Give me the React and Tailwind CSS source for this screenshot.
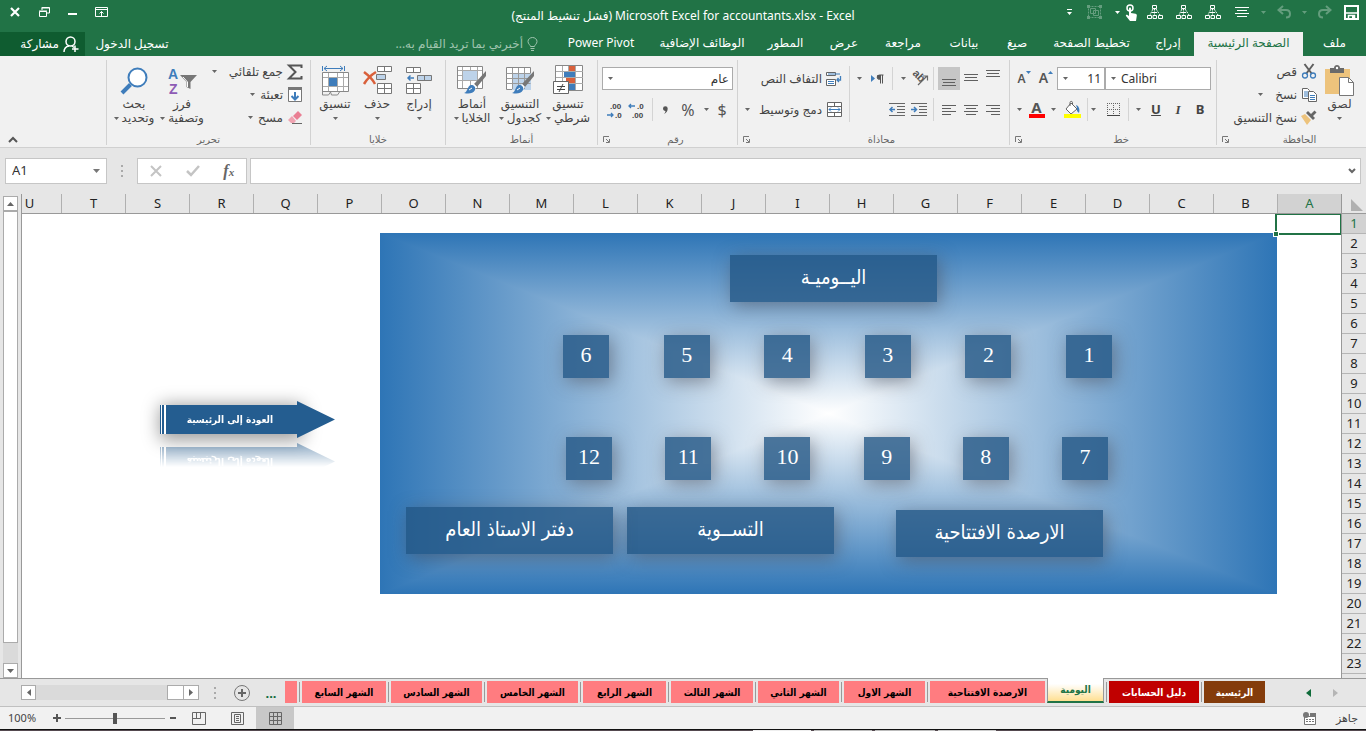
import { useState } from "react";

const COLUMNS = "ABCDEFGHIJKLMNOPQRSTU".split("");
const ROWS = Array.from({ length: 24 }, (_, i) => i + 1);

const RIBBON_TABS = [
  { label: "ملف", width: "w-[63px]" },
  { label: "الصفحة الرئيسية", width: "w-[109px]", active: true },
  { label: "إدراج", width: "w-[52px]" },
  { label: "تخطيط الصفحة", width: "w-[101px]" },
  { label: "صيغ", width: "w-[48px]" },
  { label: "بيانات", width: "w-[58px]" },
  { label: "مراجعة", width: "w-[64px]" },
  { label: "عرض", width: "w-[54px]" },
  { label: "المطور", width: "w-[63px]" },
  { label: "الوظائف الإضافية", width: "w-[104px]" },
  { label: "Power Pivot", width: "w-[98px]" },
];

const SHEETS = [
  { name: "الرئيسية", width: "w-[61px]", look: "bg-[#843c0c] text-white" },
  { name: "دليل الحسابات", width: "w-[90px]", look: "bg-[#c00000] text-white" },
  { name: "اليومية", width: "w-[57px]", active: true },
  { name: "الارصدة الافتتاحية", width: "w-[115px]" },
  { name: "الشهر الاول", width: "w-[81px]" },
  { name: "الشهر الثاني", width: "w-[81px]" },
  { name: "الشهر الثالث", width: "w-[82px]" },
  { name: "الشهر الرابع", width: "w-[83px]" },
  { name: "الشهر الخامس", width: "w-[91px]" },
  { name: "الشهر السادس", width: "w-[91px]" },
  { name: "الشهر السابع", width: "w-[84px]" },
];

const SHADOW = "bg-[#235684]/80 text-white shadow-[3px_4px_18px_rgba(70,70,80,0.5)]";

function Ico({ w, h, children, className = "" }) {
  return (
    <svg width={w} height={h} viewBox={`0 0 ${w} ${h}`} fill="none" className={`shrink-0 overflow-visible ${className}`} aria-hidden="true">
      {children}
    </svg>
  );
}

function Caret({ className = "text-[#666]" }) {
  return (
    <Ico w={5} h={3} className={className}>
      <path d="M0 0h5L2.5 3z" fill="currentColor" />
    </Ico>
  );
}

function Lines({ rows, w = 14, h = 14, color = "#606060" }) {
  return (
    <Ico w={w} h={h}>
      {rows.map(([x, y, len]) => (
        <rect key={y} x={x} y={y} width={len} height="1" fill={color} />
      ))}
    </Ico>
  );
}

function HierarchyIcon() {
  return (
    <Ico w={16} h={16}>
      <g stroke="#fff">
        <path d="M5.5 1.5h4v3h-4zM.5 11.5h4v3h-4zM6 11.5h3.500v3H6zM11.500 11.500h4v3h-4z" />
        <path d="M7.500 4.500v7M6 5l-3 6M9 5l4 6" strokeDasharray="2 1" />
        <path d="M5 8.500h5" />
      </g>
    </Ico>
  );
}

function QuickButton({ label, width, children }) {
  return (
    <button aria-label={label} className={`flex h-6 shrink-0 items-center justify-center text-white ${width}`}>
      {children}
    </button>
  );
}

function TitleBar() {
  return (
    <header className="grid h-8 shrink-0 grid-cols-[1fr_auto_1fr] bg-[#217346] text-white">
      <div className="flex">
        <QuickButton label="حفظ" width="w-[29px]">
          <Ico w={15} h={15}>
            <path d="M1 1h13v13H1z" stroke="#fff" strokeWidth="2" />
            <path d="M1 8h13M4.500 14v-3.500h6V14" stroke="#fff" strokeWidth="1.500" />
            <path d="M8 11h2v3H8z" fill="#fff" />
          </Ico>
        </QuickButton>
        <QuickButton label="إعادة" width="w-[26px]">
          <Ico w={15} h={14} className="opacity-30">
            <path d="M9 1l4.500 4L9 9M13 5H6C3 5 2 7 2 9s1 3.500 4 3.500" stroke="#fff" strokeWidth="2" />
          </Ico>
        </QuickButton>
        <QuickButton label="خيارات الإعادة" width="w-[13px]"><Caret className="text-white/30" /></QuickButton>
        <QuickButton label="تراجع" width="w-[28px]">
          <Ico w={15} h={14} className="opacity-30">
            <path d="M6 1L1.500 5 6 9M2 5h7c3 0 4 2 4 4s-1 3.500-4 3.500" stroke="#fff" strokeWidth="2" />
          </Ico>
        </QuickButton>
        <QuickButton label="خيارات التراجع" width="w-[13px]"><Caret className="text-white/30" /></QuickButton>
        <QuickButton label="توسيط" width="w-[30px]">
          <Lines color="#fff" rows={[[0, 2, 14], [2, 5, 10], [0, 8, 14], [2, 11, 10]]} />
        </QuickButton>
        <QuickButton label="تخطيط هرمي 1" width="w-[29px]"><HierarchyIcon /></QuickButton>
        <QuickButton label="تخطيط هرمي 2" width="w-[29px]"><HierarchyIcon /></QuickButton>
        <QuickButton label="تخطيط هرمي 3" width="w-[29px]"><HierarchyIcon /></QuickButton>
        <QuickButton label="وضع اللمس" width="w-[17px]">
          <Ico w={13} h={17}>
            <circle cx="5" cy="4" r="3" stroke="#fff" strokeWidth="1.500" />
            <path d="M4 4.500c0-1.500 2-1.500 2 0V9l4.500.8c1 .2 1.500.8 1.300 2L11 17H5L1 12c-.6-1 .6-1.800 1.500-1L4 12z" fill="#fff" />
          </Ico>
        </QuickButton>
        <QuickButton label="خيارات اللمس" width="w-[11px]"><Caret className="text-white" /></QuickButton>
        <QuickButton label="تجميع" width="w-[35px]">
          <Ico w={17} h={16} className="opacity-30">
            <g stroke="#fff">
              <path d="M2.500 2.500h12v11h-12z" strokeDasharray="2 1" />
              <path d="M4.500 4.500h5v5h-5zM7.500 6.500h5v5h-5z" />
            </g>
            <path d="M1 1h3v3H1zM13 1h3v3h-3zM1 12h3v3H1zM13 12h3v3h-3z" fill="#fff" />
          </Ico>
        </QuickButton>
        <QuickButton label="تخصيص الشريط" width="w-[16px]">
          <Ico w={5} h={7}>
            <path d="M0 0h5v1H0zM0 3h5L2.500 6z" fill="#fff" />
          </Ico>
        </QuickButton>
      </div>
      <h1 className="self-center text-xs whitespace-nowrap">Microsoft Excel for accountants.xlsx - Excel (فشل تنشيط المنتج)</h1>
      <div className="flex justify-end">
        <QuickButton label="خيارات عرض الشريط" width="w-[30px]">
          <Ico w={13} h={10}>
            <path d="M.5.5h12v9H.5zM0 2.500h13M6.500 9V4.500M4.500 6.500l2-2 2 2" stroke="#fff" />
          </Ico>
        </QuickButton>
        <QuickButton label="تصغير" width="w-[28px]"><span className="mt-1 h-[2px] w-[9px] bg-white" /></QuickButton>
        <QuickButton label="استعادة" width="w-[28px]">
          <Ico w={11} h={10}>
            <path d="M3 3V.5h7.500V6H8M2.500 1h8M.5 4.500h7v5h-7zM0 4h8" stroke="#fff" />
          </Ico>
        </QuickButton>
        <QuickButton label="إغلاق" width="w-[30px]">
          <Ico w={10} h={10}>
            <path d="M1 1l8 8M9 1L1 9" stroke="#fff" strokeWidth="2.200" />
          </Ico>
        </QuickButton>
      </div>
    </header>
  );
}

function RibbonTabs() {
  return (
    <nav className="flex h-6 shrink-0 bg-[#217346] text-xs text-white">
      {RIBBON_TABS.map((tab) => (
        <button
          key={tab.label}
          className={`shrink-0 whitespace-nowrap pb-0.5 ${tab.width} ${tab.active ? "bg-[#f1f1f1] text-[#217346]" : ""}`}
        >
          {tab.label}
        </button>
      ))}
      <label className="ms-[14px] flex items-center gap-1 text-[#9fc4ae]">
        <Ico w={11} h={14}>
          <path d="M3.500 9.500C3.500 8 1 7 1 4.500a4.500 4 0 0 1 9 0C10 7 7.500 8 7.500 9.500zM3.500 11.500h4M4 13.500h3" stroke="currentColor" />
        </Ico>
        <input className="w-40 bg-transparent outline-none placeholder:text-[#9fc4ae]" placeholder="أخبرني بما تريد القيام به..." aria-label="أخبرني بما تريد القيام به" />
      </label>
      <div className="ms-auto flex">
        <button className="w-[94px] whitespace-nowrap">تسجيل الدخول</button>
        <button className="flex w-[85px] items-center gap-1 bg-[#0f5c30] ps-[6px]">
          <Ico w={16} h={16}>
            <circle cx="7.500" cy="5.500" r="4.500" stroke="#fff" strokeWidth="1.500" />
            <path d="M1 16c0-3 2-5.500 5-6M9 10l2 1.500M12 9.500V16M9 13h6.500" stroke="#fff" strokeWidth="1.500" />
          </Ico>
          مشاركة
        </button>
      </div>
    </nav>
  );
}

function Group({ title, width, launcher, children }) {
  return (
    <section className={`mt-1 mb-[2px] flex shrink-0 flex-col border-l border-[#d2d2d2] ${width}`}>
      <div className="flex h-[73px]">{children}</div>
      <div className="flex items-center text-[10px] leading-3 text-[#666]">
        <h2 className="grow text-center">{title}</h2>
        {launcher && (
          <button aria-label={`خيارات ${title}`} className="flex w-4 justify-center">
            <Ico w={7} h={7}>
              <path d="M.5 6V.5H6M3 3l3 3M6.500 3v3.500H3" stroke="#777" />
            </Ico>
          </button>
        )}
      </div>
    </section>
  );
}

function LargeButton({ lines, width, icon }) {
  return (
    <button className={`flex h-full shrink-0 flex-col items-center pt-1 leading-[14px] ${width}`}>
      <span className="flex h-[33px] items-center">{icon}</span>
      <span className="whitespace-nowrap">{lines[0]}</span>
      <span className="flex h-[14px] items-center gap-[3px] whitespace-nowrap">
        {lines[1]}
        <Caret />
      </span>
    </button>
  );
}

function SmallButton({ label, icon, caret }) {
  return (
    <button className="flex h-[23px] items-center gap-1 whitespace-nowrap">
      <span className="flex w-4 justify-center">{icon}</span>
      {label}
      {caret && <span className={caret}><Caret /></span>}
    </button>
  );
}

function Tool({ label, width = "w-[22px]", on, children }) {
  return (
    <button aria-label={label} className={`flex h-[23px] shrink-0 items-center justify-center ${width} ${on ? "bg-[#c6c6c6]" : ""}`}>
      {children}
    </button>
  );
}

function Sep() {
  return <span className="h-[23px] w-px shrink-0 bg-[#d4d4d4]" />;
}

function Picker({ label, value, width, align = "text-right" }) {
  return (
    <div className={`relative h-[23px] shrink-0 border border-[#ababab] bg-white ${width}`}>
      <select aria-label={label} className={`h-full w-full appearance-none bg-transparent px-[3px] text-xs text-[#333] ${align}`}>
        <option>{value}</option>
      </select>
      <span className="pointer-events-none absolute inset-y-0 left-[5px] flex items-center"><Caret /></span>
    </div>
  );
}

function ClipboardGroup() {
  return (
    <Group title="الحافظة" width="w-[150px]" launcher>
      <LargeButton
        width="ms-1 w-[45px]"
        lines={["لصق"]}
        icon={
          <Ico w={29} h={31}>
            <path d="M0 4h25v25H0z" fill="#edc37c" />
            <path d="M5 3h4c0-4 6-4 6 0h4v5H5z" fill="#6a6a6a" />
            <circle cx="12" cy="3" r="1.200" fill="#fff" />
            <path d="M14.500 12.500h9l5 5v13h-14z" fill="#fff" stroke="#777" />
            <path d="M23.500 12.500v5h5" stroke="#777" />
          </Ico>
        }
      />
      <div className="flex flex-col">
        <SmallButton
          label="قص"
          icon={
            <Ico w={14} h={15}>
              <path d="M2.500 0L10 10M11.500 0L4 10" stroke="#5f5f5f" strokeWidth="2" />
              <circle cx="3" cy="11.500" r="2.500" stroke="#3f7dbb" strokeWidth="1.300" />
              <circle cx="11" cy="11.500" r="2.500" stroke="#3f7dbb" strokeWidth="1.300" />
            </Ico>
          }
        />
        <SmallButton
          label="نسخ"
          caret="ms-2"
          icon={
            <Ico w={15} h={14}>
              <path d="M.5.500h5l2 2v8h-7z" fill="#fff" stroke="#666" />
              <path d="M2 4h4M2 6h4M2 8h4" stroke="#3f7dbb" />
              <path d="M6.500 3.500h5l3 3v7h-8z" fill="#fff" stroke="#666" />
              <path d="M8 7.500h5M8 9.500h5M8 11.500h5" stroke="#3f7dbb" />
            </Ico>
          }
        />
        <SmallButton
          label="نسخ التنسيق"
          icon={
            <Ico w={16} h={15}>
              <path d="M0 6l4-2 6 6-4 5z" fill="#edc37c" />
              <path d="M5 3l2-2 7 7-2 2z" fill="#666" />
              <path d="M9.500 4.500l4-4 2 2-4 4z" fill="#666" />
            </Ico>
          }
        />
      </div>
    </Group>
  );
}

function FontGroup() {
  return (
    <Group title="خط" width="w-[207px]" launcher>
      <div className="flex flex-col gap-2 ps-[5px] pt-[7px]">
        <div className="flex items-center">
          <Picker label="الخط" value="Calibri" width="w-[106px]" align="pl-[15px] text-left" />
          <Picker label="حجم الخط" value="11" width="w-[48px]" />
          <Tool label="تكبير الخط">
            <Ico w={5} h={3} className="mb-3"><path d="M0 3h5L2.500 0z" fill="#3f7dbb" /></Ico>
            <span className="font-semibold text-[14px] text-[#555]">A</span>
          </Tool>
          <Tool label="تصغير الخط">
            <Ico w={5} h={3} className="mb-3"><path d="M0 0h5L2.500 3z" fill="#3f7dbb" /></Ico>
            <span className="font-semibold text-xs text-[#555]">A</span>
          </Tool>
        </div>
        <div className="flex items-center text-[13px] text-[#444]">
          <Tool label="غامق"><b>B</b></Tool>
          <Tool label="مائل"><i className="font-['Liberation_Serif',serif] font-bold">I</i></Tool>
          <Tool label="تسطير"><b className="underline">U</b></Tool>
          <Tool label="خيارات التسطير" width="w-[14px]"><Caret /></Tool>
          <span className="w-[2px]" />
          <Sep />
          <Tool label="حدود" width="w-[30px]">
            <Ico w={13} h={13}>
              <path d="M.5 0v12M6.500 0v12M12.500 0v12M0 .5h13M0 6.500h13" stroke="#666" strokeDasharray="1 1" />
              <path d="M0 12.500h13" stroke="#444" />
            </Ico>
          </Tool>
          <Tool label="خيارات الحدود" width="w-[10px]"><Caret /></Tool>
          <Sep />
          <Tool label="لون التعبئة" width="w-[30px]">
            <Ico w={17} h={17}>
              <path d="M7 2l6 6-6 5-5-5z" fill="#fff" stroke="#666" />
              <path d="M6 5V1.500c0-1.500 2.500-1.500 2.500 0V4" stroke="#666" />
              <path d="M12 4c3 1 4 4 3 8l-2-2V7z" fill="#3f7dbb" />
              <path d="M0 13h17v4H0z" fill="#ff0" />
            </Ico>
          </Tool>
          <Tool label="خيارات التعبئة" width="w-[8px]"><Caret /></Tool>
          <Tool label="لون الخط" width="w-[25px]">
            <span className="flex w-4 flex-col items-center text-[15px] leading-[13px] font-bold text-[#555]">
              A<span className="h-1 w-4 bg-[#f00]" />
            </span>
          </Tool>
          <Tool label="خيارات لون الخط" width="w-[10px]"><Caret /></Tool>
        </div>
      </div>
    </Group>
  );
}

function AlignmentGroup() {
  return (
    <Group title="محاذاة" width="w-[272px]" launcher>
      <div className="flex flex-col gap-2 ps-[5px] pt-[7px]">
        <div className="flex items-center">
          <Tool label="محاذاة للأعلى"><Lines h={20} rows={[[0, 1, 14], [1, 4, 12], [0, 7, 14]]} /></Tool>
          <Tool label="محاذاة للوسط"><Lines h={20} rows={[[0, 5, 14], [1, 8, 12], [0, 11, 14]]} /></Tool>
          <Tool label="محاذاة للأسفل" on><Lines h={20} rows={[[0, 10, 14], [1, 13, 12], [0, 16, 14]]} /></Tool>
          <span className="w-1" />
          <Sep />
          <Tool label="الاتجاه" width="w-[26px]">
            <Ico w={17} h={17}>
              <text
                x="0" y="4" fontSize="11" fontWeight="600" fill="#555" transform="rotate(45 0 4)"
                style={{ direction: "ltr" }} className="font-['Liberation_Sans',sans-serif]"
              >
                ab
              </text>
              <path d="M6 15l9-9M11 6h4.500v4.500" stroke="#666" strokeWidth="1.200" />
            </Ico>
          </Tool>
          <Tool label="خيارات الاتجاه" width="w-[8px]"><Caret /></Tool>
          <span className="w-[6px]" />
          <Sep />
          <Tool label="اتجاه النص" width="w-[30px]">
            <Ico w={13} h={10}>
              <path d="M0 1l4 3.500L0 8z" fill="#3f7dbb" />
              <path d="M12.500 1H8.500a2 2 0 0 0 0 4.500H9M9.500 1v8.500M11.500 1v8.500" stroke="#555" />
              <path d="M6.500 1h3v4h-2c-2-1-2-3-1-4z" fill="#555" />
            </Ico>
          </Tool>
          <Tool label="خيارات اتجاه النص" width="w-[6px]"><Caret /></Tool>
        </div>
        <div className="flex items-center">
          <Tool label="محاذاة لليمين"><Lines rows={[[0, 2, 14], [5, 5, 9], [0, 8, 14], [5, 11, 9]]} /></Tool>
          <Tool label="توسيط"><Lines rows={[[0, 2, 14], [2, 5, 10], [0, 8, 14], [2, 11, 10]]} /></Tool>
          <Tool label="محاذاة لليسار"><Lines rows={[[0, 2, 14], [0, 5, 9], [0, 8, 14], [0, 11, 9]]} /></Tool>
          <span className="w-1" />
          <Sep />
          <span className="w-[3px]" />
          <Tool label="إنقاص المسافة البادئة">
            <Ico w={16} h={13}>
              <path d="M0 .5h16M8 3.500h8M8 6.500h8M8 9.500h8M0 12.500h16" stroke="#666" />
              <path d="M0 6.500h5M3 4l2.500 2.500L3 9" stroke="#3f7dbb" strokeWidth="1.500" />
            </Ico>
          </Tool>
          <Tool label="زيادة المسافة البادئة">
            <Ico w={16} h={13}>
              <path d="M0 .5h16M8 3.500h8M8 6.500h8M8 9.500h8M0 12.500h16" stroke="#666" />
              <path d="M1 6.500h5M3.500 4L1 6.500 3.500 9" stroke="#3f7dbb" strokeWidth="1.500" />
            </Ico>
          </Tool>
        </div>
      </div>
      <span className="ms-auto mt-[6px] h-14 w-px bg-[#d4d4d4]" />
      <div className="flex w-[111px] flex-col gap-2 ps-[7px] pt-[7px]">
        <SmallButton
          label="التفاف النص"
          icon={
            <Ico w={16} h={15}>
              <path d="M.5 1.500h9v3h-9zM.5 8.500h9v6h-9z" fill="#fff" stroke="#666" />
              <path d="M2 3h12M2 10.500h6M2 12.500h6" stroke="#3f7dbb" />
              <path d="M14.500 5v4H11M12.500 7L11 9l2 2" stroke="#3f7dbb" strokeWidth="1.300" />
            </Ico>
          }
        />
        <div className="flex items-center justify-between">
          <SmallButton
            label="دمج وتوسيط"
            icon={
              <Ico w={15} h={15}>
                <path d="M.5.500h14v14H.500zM.500 4.500h14M.500 10.500h14M7.500.500v4M7.500 10.500v4" fill="#fff" stroke="#666" />
                <path d="M2 7.500h11M4 5.500l-2 2 2 2M11 5.500l2 2-2 2" stroke="#3f7dbb" />
              </Ico>
            }
          />
          <Tool label="خيارات الدمج" width="w-[18px]"><Caret /></Tool>
        </div>
      </div>
    </Group>
  );
}

function DecimalIcon({ up }) {
  return (
    <Ico w={16} h={18}>
      <g fontSize="8" fill="#444" fontWeight="700" style={{ direction: "ltr" }} className="font-['Liberation_Sans',sans-serif]">
        <text x={up ? 9 : 4} y="8">{up ? ".0" : ".00"}</text>
        <text x={up ? 4 : 9} y="17">{up ? ".00" : ".0"}</text>
      </g>
      {up
        ? <path d="M1 5h6M3 3L1 5l2 2" stroke="#3f7dbb" strokeWidth="1.300" />
        : <path d="M1 14h6M5 12l2 2-2 2" stroke="#3f7dbb" strokeWidth="1.300" />}
    </Ico>
  );
}

function NumberGroup() {
  return (
    <Group title="رقم" width="w-[140px]" launcher>
      <div className="flex flex-col gap-2 ps-[4px] pt-[7px]">
        <Picker label="تنسيق الأرقام" value="عام" width="w-[131px]" />
        <div className="flex items-center text-base text-[#555]">
          <Tool label="عملة">$</Tool>
          <Tool label="خيارات العملة" width="w-[10px]"><Caret /></Tool>
          <Tool label="نسبة مئوية" width="w-[26px]">%</Tool>
          <Tool label="فاصلة" width="w-[20px]">
            <Ico w={5} h={8}><path d="M0 2.500a2.300 2.300 0 0 1 4.700 0C4.700 5 3.500 7 1 8c1-1 1.500-2 1.500-3C1 5 0 4 0 2.500z" fill="#555" /></Ico>
          </Tool>
          <span className="w-[2px]" />
          <Sep />
          <Tool label="زيادة المنازل العشرية" width="w-[32px]"><DecimalIcon up /></Tool>
          <Tool label="إنقاص المنازل العشرية" width="w-[12px]"><DecimalIcon /></Tool>
        </div>
      </div>
    </Group>
  );
}

function Brush() {
  return (
    <g>
      <path d="M29 6v5l-9 11-3-3z" fill="#777" />
      <path d="M17 19l3 3-2 2-3-3z" fill="#fff" />
      <path d="M14 20c3 0 5 2 4 5-2 4-7 4-11 3 4-1 3-7 7-8z" fill="#3f7dbb" />
      <path d="M12 25l3-2" stroke="#fff" />
    </g>
  );
}

function StylesGroup() {
  return (
    <Group title="أنماط" width="w-[152px]">
      <LargeButton
        width="ms-[5px] w-12"
        lines={["تنسيق", "شرطي"]}
        icon={
          <Ico w={30} h={31}>
            <path d="M2.500.5h27v25h-27z" fill="#fff" stroke="#888" />
            <path d="M9.500 1v24M15.500 1v24M22.500 1v24M3 6.500h27M3 12.500h27M3 18.500h27" stroke="#aaa" />
            <path d="M16 1h6v5h-6zM13 13h9v5h-9z" fill="#d9603b" />
            <path d="M11 7h11v5H11zM16 19h6v6h-6z" fill="#3f7dbb" />
            <path d="M.5 16.500h15v12H.5z" fill="#fff" stroke="#666" />
            <path d="M4 21.500h8M4 24.500h8M10 19l-4 8" stroke="#444" />
          </Ico>
        }
      />
      <LargeButton
        width="w-12"
        lines={["التنسيق", "كجدول"]}
        icon={
          <Ico w={30} h={31}>
            <path d="M1.500 2.500h24v22h-24z" fill="#fff" stroke="#888" />
            <path d="M7 8h19v17H7z" fill="#bdd3ea" />
            <path d="M1.500 8.500h24M1.500 13.500h24M1.500 18.500h24M7.500 3v21M13.500 3v21M19.500 3v21" stroke="#999" />
            <Brush />
          </Ico>
        }
      />
      <LargeButton
        width="w-12"
        lines={["أنماط", "الخلايا"]}
        icon={
          <Ico w={30} h={31}>
            <path d="M.5 1.500h25v22H.5z" fill="#fff" stroke="#888" />
            <path d="M5.500 2v21M20.500 2v21M1 5.500h24M1 15.500h24M13.500 2v3M13.500 16v7M1 10.500h4" stroke="#aaa" />
            <path d="M6 6h14v9H6z" fill="#bdd3ea" />
            <Brush />
          </Ico>
        }
      />
    </Group>
  );
}

function CellsGroup() {
  return (
    <Group title="خلايا" width="w-[135px]">
      <LargeButton
        width="ms-[5px] w-[42px]"
        lines={["إدراج"]}
        icon={
          <Ico w={28} h={29}>
            <path d="M1.500 1.500h14v5h-14zM8.500 1.500v5M1.500 17.500h14v10h-14zM8.500 17.500v10M1.500 22.500h14" fill="#fff" stroke="#777" />
            <path d="M12.500 9.500h14v5h-14zM19.500 9.500v5" fill="#bdd3ea" stroke="#777" />
            <path d="M3 12h6M5.500 9.500L3 12l2.500 2.500" stroke="#3f7dbb" strokeWidth="1.500" />
          </Ico>
        }
      />
      <LargeButton
        width="w-[42px]"
        lines={["حذف"]}
        icon={
          <Ico w={30} h={29}>
            <path d="M15.500.5h14v5h-14zM22.500.5v5M15.500 17.500h14v10h-14zM22.500 17.500v10M15.500 22.500h14" fill="#fff" stroke="#777" />
            <path d="M14.500 8.500h9v5h-9z" fill="#bdd3ea" stroke="#777" />
            <path d="M2 6c4 3 9 8 11 12M14 6C9 9 5 13 2 18" stroke="#d9603b" strokeWidth="2.500" />
          </Ico>
        }
      />
      <LargeButton
        width="w-[42px]"
        lines={["تنسيق"]}
        icon={
          <Ico w={29} h={32}>
            <path d="M1.500 1v5M23.500 1v5M3 3.500h19M6 1L3 3.500 6 6M19 1l3 2.500L19 6" stroke="#3f7dbb" />
            <path d="M1.500 7.500h26v19h-26z" fill="#fff" stroke="#888" />
            <path d="M7.500 8v18M16.500 8v18M22.500 8v18M2 12.500h25M2 21.500h25" stroke="#aaa" />
            <path d="M8 13h8v8H8z" fill="#3f7dbb" />
            <path d="M1.500 26v4h6l2-3 1 3h6l2-3" stroke="#888" />
          </Ico>
        }
      />
    </Group>
  );
}

function EditingGroup() {
  return (
    <Group title="تحرير" width="w-[204px]">
      <div className="flex w-[104px] flex-col ps-[7px]">
        <SmallButton
          label="جمع تلقائي"
          caret="ms-2"
          icon={
            <Ico w={16} h={16}>
              <path d="M14.500 4V1.500H2L8.500 8 2 14.500h12.500V12" stroke="#555" strokeWidth="2" />
            </Ico>
          }
        />
        <SmallButton
          label="تعبئة"
          caret="ms-px"
          icon={
            <Ico w={14} h={15}>
              <path d="M.5.5h13v14H.5z" fill="#fff" stroke="#777" />
              <path d="M0 0h14v3H0z" fill="#777" />
              <path d="M7 5v8M3.500 9L7 12.500 10.500 9" stroke="#3f7dbb" strokeWidth="2" />
            </Ico>
          }
        />
        <SmallButton
          label="مسح"
          caret="ms-px"
          icon={
            <Ico w={15} h={14}>
              <path d="M5 5l5-5 4 4-5 5z" fill="#ea7f93" />
              <path d="M0 9l4-4 4 5-2 2H3z" fill="#f0a3b1" />
              <path d="M4 12.500h10" stroke="#666" />
            </Ico>
          }
        />
      </div>
      <LargeButton
        width="w-12"
        lines={["فرز", "وتصفية"]}
        icon={
          <Ico w={29} h={28}>
            <g fontSize="14" fontWeight="700" style={{ direction: "ltr" }} className="font-['Liberation_Sans',sans-serif]">
              <text x="0" y="12" fill="#3f7dbb">A</text>
              <text x="1" y="27" fill="#8e5bb5">Z</text>
            </g>
            <path d="M12 8h17l-6.500 7v7l-4-2v-5z" fill="#777" />
            <path d="M15 10l4.500 5v5" stroke="#fff" />
          </Ico>
        }
      />
      <LargeButton
        width="w-12"
        lines={["بحث", "وتحديد"]}
        icon={
          <Ico w={28} h={28}>
            <circle cx="17.500" cy="10.500" r="9" fill="#fff" stroke="#3f7dbb" strokeWidth="2" />
            <path d="M10.500 17.500L2 26" stroke="#3f7dbb" strokeWidth="4" />
          </Ico>
        }
      />
    </Group>
  );
}

function Ribbon() {
  return (
    <div className="flex shrink-0 border-b border-[#d0d0d0] bg-[#f1f1f1] text-xs text-[#444]">
      <ClipboardGroup />
      <FontGroup />
      <AlignmentGroup />
      <NumberGroup />
      <StylesGroup />
      <CellsGroup />
      <EditingGroup />
      <button aria-label="طي الشريط" className="ms-auto me-2 mb-1 self-end">
        <Ico w={10} h={7}>
          <path d="M1 6l4-4 4 4" stroke="#555" strokeWidth="2" />
        </Ico>
      </button>
    </div>
  );
}

function Dots() {
  return (
    <Ico w={2} h={12}>
      <path d="M0 0h2v2H0zM0 5h2v2H0zM0 10h2v2H0z" fill="#aaa" />
    </Ico>
  );
}

function FormulaBar() {
  const [formula, setFormula] = useState("");
  return (
    <div dir="ltr" className="flex h-[46px] shrink-0 items-start px-[5px] pt-[10px]">
      <div className="flex h-[26px] w-[102px] items-center border border-[#c6c6c6] bg-white pr-[6px]">
        <input aria-label="مربع الاسم" defaultValue="A1" className="w-full min-w-0 bg-transparent px-[6px] text-[13px] text-[#333] outline-none" />
        <Ico w={7} h={4}><path d="M0 0h7L3.500 4z" fill="#777" /></Ico>
      </div>
      <span className="flex h-[26px] w-[30px] items-center justify-center"><Dots /></span>
      <div className="flex h-[26px] w-[110px] items-center justify-around border border-[#c6c6c6] bg-white">
        <button aria-label="إلغاء"><Ico w={12} h={12}><path d="M1 1l10 10M11 1L1 11" stroke="#c4c4c4" strokeWidth="2" /></Ico></button>
        <button aria-label="إدخال"><Ico w={14} h={12}><path d="M1 6l4 4L13 1" stroke="#c4c4c4" strokeWidth="2.500" /></Ico></button>
        <button aria-label="إدراج دالة" className="font-['Liberation_Serif',serif] text-base leading-4 font-bold text-[#666] italic">
          f<span className="text-[11px]">x</span>
        </button>
      </div>
      <div className="ml-[3px] flex h-[26px] grow items-center border border-[#c6c6c6] bg-white pr-1">
        <input aria-label="شريط الصيغة" value={formula} onChange={(e) => setFormula(e.target.value)} className="grow bg-transparent px-1 text-[13px] outline-none" />
        <Ico w={8} h={6}><path d="M1 1l3 3 3-3" stroke="#666" strokeWidth="2" /></Ico>
      </div>
    </div>
  );
}

// rectangular "from center" gradient built of four triangles
function PanelBackdrop() {
  const sides = [
    { id: "top", points: "0,0 100,0 50,50", x2: 50, y2: 0 },
    { id: "right", points: "100,0 100,100 50,50", x2: 100, y2: 50 },
    { id: "bottom", points: "100,100 0,100 50,50", x2: 50, y2: 100 },
    { id: "left", points: "0,100 0,0 50,50", x2: 0, y2: 50 },
  ];
  return (
    <svg viewBox="0 0 100 100" preserveAspectRatio="none" className="absolute inset-0 h-full w-full bg-[#2e75b6]" aria-hidden="true">
      {sides.map((s) => (
        <g key={s.id}>
          <linearGradient id={s.id} gradientUnits="userSpaceOnUse" x1="50" y1="50" x2={s.x2} y2={s.y2}>
            <stop offset="0" stopColor="#fff" />
            <stop offset="1" stopColor="#2e75b6" />
          </linearGradient>
          <polygon points={s.points} fill={`url(#${s.id})`} shapeRendering="crispEdges" />
        </g>
      ))}
    </svg>
  );
}

function MonthRow({ months, place }) {
  return (
    <div className={`absolute flex justify-between ${place}`}>
      {months.map((m) => (
        <button key={m} className={`h-[43px] w-[46px] pb-1 font-['Liberation_Serif',serif] text-[22px] ${SHADOW}`}>
          {m}
        </button>
      ))}
    </div>
  );
}

function BigButton({ place, children }) {
  return (
    <button className={`absolute h-[47px] w-[207px] pb-1 font-['DejaVu_Sans_Condensed','DejaVu_Sans',sans-serif] text-xl ${place} ${SHADOW}`}>
      {children}
    </button>
  );
}

function HomeArrow() {
  return (
    <div className="absolute top-[187px] left-[138px] h-[37px] w-[175px]">
      <div className="absolute top-1 right-[38px] bottom-1 left-0 shadow-[3px_3px_18px_3px_rgba(0,0,0,0.4)]" />
      <button className="relative flex h-full w-full items-center text-white [-webkit-box-reflect:below_5px_linear-gradient(transparent_35%,rgba(0,0,0,0.5))]">
        <svg viewBox="0 0 175 37" className="absolute inset-0 h-full w-full" aria-hidden="true">
          <path d="M0 4h137v29H0z" fill="#fff" />
          <path d="M6 4h131V0l38 18.500L137 37v-4H6zM0 4h1v29H0zM2 4h2v29H2z" fill="#245d90" />
        </svg>
        <span className="relative w-full pr-[62px] pl-[38px] text-center font-['DejaVu_Sans_Condensed','DejaVu_Sans',sans-serif] text-[10px] font-bold whitespace-nowrap">
          العودة إلى الرئيسية
        </span>
      </button>
    </div>
  );
}

function Sheet() {
  return (
    <main className="flex min-h-0 grow overflow-hidden">
      <div className="flex w-6 shrink-0 flex-col text-[13px] text-[#222]">
        <div className="flex h-[20px] shrink-0 items-end justify-end border-b border-[#999] p-[2px] pl-[9px]">
          <Ico w={12} h={12}><path d="M0 0l12 12H0z" fill="#b0b0b0" /></Ico>
        </div>
        {ROWS.map((row) => (
          <div
            key={row}
            className={`flex h-5 shrink-0 items-center justify-center border-b border-[#b5b5b5] ${row === 1 ? "bg-[#d2d2d2] text-[#217346]" : ""}`}
          >
            {row}
          </div>
        ))}
      </div>
      <div className="flex min-w-0 grow flex-col border-x border-[#999]">
        <div className="flex h-[20px] shrink-0 overflow-hidden border-b border-[#999] text-[13px] text-[#222]">
          {COLUMNS.map((col) => (
            <div
              key={col}
              className={`flex w-16 shrink-0 items-center justify-center border-l border-[#b0b0b0] ${col === "A" ? "bg-[#d2d2d2] text-[#217346]" : ""}`}
            >
              {col}
            </div>
          ))}
        </div>
        <div className="relative grow overflow-hidden bg-white">
          <HomeArrow />
          <div className="absolute top-[19px] right-16 h-[361px] w-[897px] overflow-hidden">
            <PanelBackdrop />
            <BigButton place="left-[350px] top-[22px]">اليــوميـة</BigButton>
            <MonthRow months={[1, 2, 3, 4, 5, 6]} place="left-[183px] top-[102px] w-[549px]" />
            <MonthRow months={[7, 8, 9, 10, 11, 12]} place="left-[186px] top-[204px] w-[542px]" />
            <BigButton place="left-[516px] top-[277px]">الارصدة الافتتاحية</BigButton>
            <BigButton place="left-[247px] top-[274px]">التســوية</BigButton>
            <BigButton place="left-[26px] top-[274px]">دفتر الاستاذ العام</BigButton>
          </div>
          <div className="absolute -top-px -right-px h-[22px] w-[67px] border-2 border-[#217346]" />
          <div className="absolute top-[17px] right-[62px] h-[6px] w-[6px] border border-white bg-[#217346]" />
        </div>
      </div>
      <div className="flex w-[21px] shrink-0 flex-col items-center pt-[2px]">
        <button aria-label="تمرير لأعلى" className="flex h-[15px] w-[15px] shrink-0 items-center justify-center border border-[#ababab] bg-white">
          <Ico w={7} h={4}><path d="M0 4h7L3.500 0z" fill="#666" /></Ico>
        </button>
        <div className="flex w-[15px] grow flex-col bg-[#dadada]">
          <div className="mb-5 grow border border-[#ababab] bg-white" />
        </div>
        <button aria-label="تمرير لأسفل" className="flex h-[15px] w-[15px] shrink-0 items-center justify-center border border-[#ababab] bg-white">
          <Ico w={7} h={4}><path d="M0 0h7L3.500 4z" fill="#666" /></Ico>
        </button>
      </div>
    </main>
  );
}

function SheetTab({ sheet }) {
  if (sheet.active) {
    return (
      <button className={`-mt-px mb-[3px] h-[25px] shrink-0 border-x border-b-2 border-x-[#999] border-b-[#217346] bg-linear-to-b from-white from-25% to-[#ffdf90] text-[#217346] ${sheet.width}`}>
        {sheet.name}
      </button>
    );
  }
  return (
    <div className="flex shrink-0 gap-[2px]">
      <button className={`mt-[2px] h-[22px] whitespace-nowrap ${sheet.width} ${sheet.look || "bg-[#ff7c80] text-black"}`}>
        {sheet.name}
      </button>
      <span className="mt-[3px] h-5 w-px bg-[#999]" />
    </div>
  );
}

function SheetBar() {
  return (
    <div className="flex h-7 shrink-0 border-t border-[#999]">
      <div className="flex w-[101px] shrink-0 items-center gap-[22px] ps-[28px]">
        <button aria-label="الورقة السابقة"><Ico w={5} h={8}><path d="M0 0l5 4-5 4z" fill="#b5b5b5" /></Ico></button>
        <button aria-label="الورقة التالية"><Ico w={5} h={8}><path d="M5 0L0 4l5 4z" fill="#0f6b3a" /></Ico></button>
      </div>
      <div className="flex gap-[2px] font-['DejaVu_Sans_Condensed','DejaVu_Sans',sans-serif] text-[10px] font-bold">
        {SHEETS.map((sheet) => <SheetTab key={sheet.name} sheet={sheet} />)}
        <span className="mt-[2px] h-[22px] w-3 bg-[#ff7c80]" />
      </div>
      <div className="flex items-center ps-2">
        <button aria-label="المزيد من الأوراق" className="w-3 text-[13px] leading-4 font-bold text-[#0f6b3a]">...</button>
        <button aria-label="ورقة جديدة" className="ms-[15px]">
          <Ico w={16} h={16}>
            <circle cx="8" cy="8" r="7.500" stroke="#777" />
            <path d="M8 4v8M4 8h8" stroke="#666" strokeWidth="2" />
          </Ico>
        </button>
        <span className="ms-[18px]"><Dots /></span>
      </div>
      <div dir="ltr" className="mr-auto ml-[21px] flex h-[15px] w-[178px] self-center bg-[#dadada]">
        <button aria-label="تمرير لليسار" className="flex w-[15px] items-center justify-center border border-[#ababab] bg-white">
          <Ico w={4} h={7}><path d="M4 0v7L0 3.500z" fill="#666" /></Ico>
        </button>
        <span className="ml-auto w-[17px] border border-[#ababab] bg-white" />
        <button aria-label="تمرير لليمين" className="flex w-[15px] items-center justify-center border border-l-0 border-[#ababab] bg-white">
          <Ico w={4} h={7}><path d="M0 0v7l4-3.500z" fill="#666" /></Ico>
        </button>
      </div>
    </div>
  );
}

function StatusBar() {
  return (
    <footer className="flex h-[23px] shrink-0 items-stretch border-t border-t-[#c0c0c0] bg-[#f1f1f1] text-[11px] text-[#444]">
      <div className="flex items-center gap-5 ps-2">
        <span>جاهز</span>
        <Ico w={13} h={13}>
          <path d="M1.500 4.500h11v8h-11z" fill="#fff" stroke="#777" />
          <path d="M7 1h6v4H7z" fill="#777" />
          <circle cx="3" cy="3" r="3" fill="#777" />
          <path d="M3 7.500h8M3 9.500h8" stroke="#777" strokeDasharray="2 1" />
        </Ico>
      </div>
      <div className="ms-auto flex items-center">
        <button aria-label="عادي" className="flex h-full w-[38px] items-center justify-center bg-[#c8c8c8]">
          <Ico w={13} h={13}><path d="M.5.500h12v12H.500zM4.500 0v13M8.500 0v13M0 4.500h13M0 8.500h13" stroke="#666" /></Ico>
        </button>
        <button aria-label="تخطيط الصفحة" className="flex h-full w-[38px] items-center justify-center">
          <Ico w={13} h={13}><path d="M.5.500h12v12H.500zM3.500 2.500h6v8h-6zM5 4.500h3M5 6.500h3M5 8.500h3" stroke="#666" /></Ico>
        </button>
        <button aria-label="معاينة فواصل الصفحات" className="flex h-full w-[38px] items-center justify-center">
          <Ico w={14} h={13}><path d="M.5.500h13v12H.500zM.500 6.500h8v-6M4.500.500v6" stroke="#666" /></Ico>
        </button>
        <div dir="ltr" className="flex items-center pl-2">
          <span className="w-[44px] text-[11px]">100%</span>
          <button aria-label="تكبير" className="flex w-[10px] justify-center">
            <Ico w={8} h={8}><path d="M4 0v8M0 4h8" stroke="#555" strokeWidth="2" /></Ico>
          </button>
          <input
            type="range"
            aria-label="مستوى التكبير"
            defaultValue={50}
            className="mx-[3px] h-3 w-[100px] appearance-none bg-[linear-gradient(#999,#999)] bg-[length:100%_1px] bg-center bg-no-repeat [&::-webkit-slider-thumb]:h-[11px] [&::-webkit-slider-thumb]:w-1 [&::-webkit-slider-thumb]:appearance-none [&::-webkit-slider-thumb]:bg-[#555]"
          />
          <button aria-label="تصغير العرض" className="mr-[2px] flex w-[10px] justify-center">
            <Ico w={6} h={2}><path d="M0 0h6v2H0z" fill="#555" /></Ico>
          </button>
        </div>
      </div>
    </footer>
  );
}

// top edge of the desktop taskbar with its window buttons
function TaskbarEdge() {
  return (
    <div dir="ltr" className="flex h-[2px] shrink-0 justify-center gap-[3px] border-t border-[#111] bg-[#554a50] ps-[382px]">
      <span className="h-px w-[58px] bg-[#eee]" />
      <span className="h-px w-[58px] bg-[#bbb]" />
      <span className="h-px w-[60px] bg-[#bbb]" />
      <span className="h-px w-[58px] bg-[#ccc]" />
    </div>
  );
}

export default function App() {
  return (
    <div dir="rtl" className="flex h-screen flex-col overflow-hidden bg-[#e6e6e6] font-['Noto_Sans','DejaVu_Sans',sans-serif]">
      <TitleBar />
      <RibbonTabs />
      <Ribbon />
      <FormulaBar />
      <Sheet />
      <SheetBar />
      <StatusBar />
      <TaskbarEdge />
    </div>
  );
}
